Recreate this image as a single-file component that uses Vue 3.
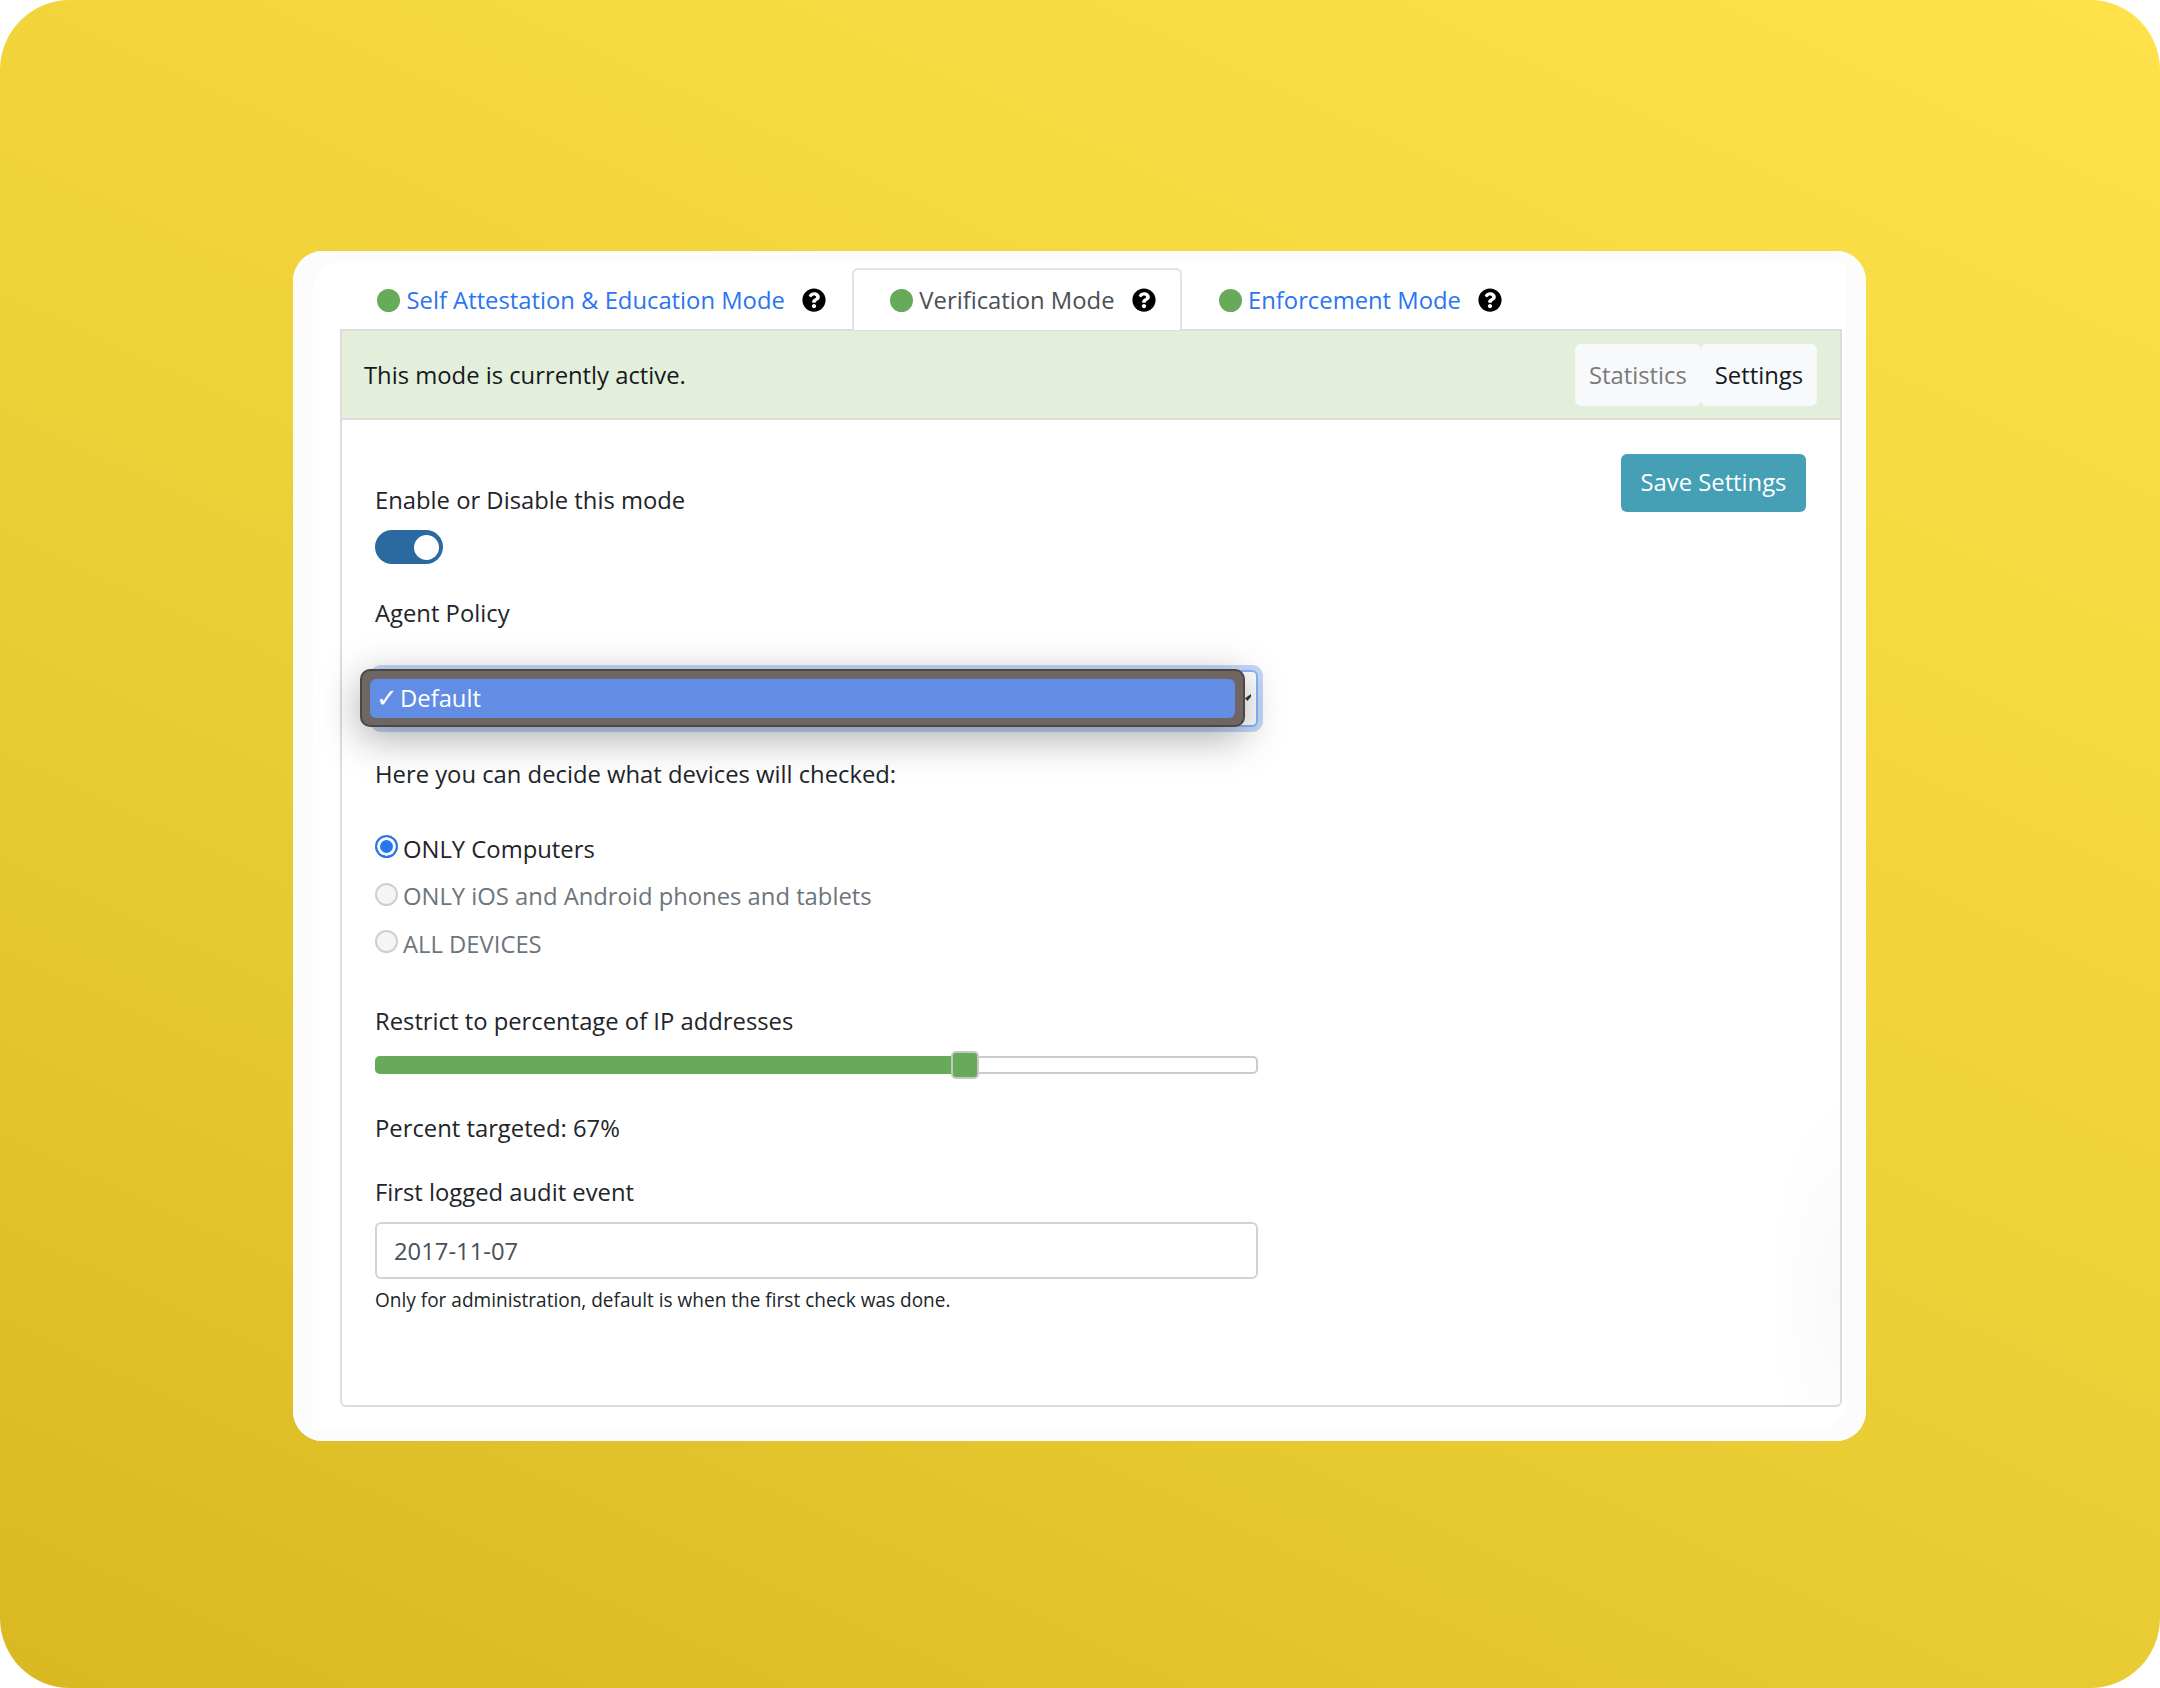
<template>
  <div class="page">
    <div class="card">
      <ul class="tabs">
        <li v-for="tab in tabs" :key="tab.name" class="tab" :class="{ active: tab.active }">
          <span class="dot"></span>
          <span class="tab-name">{{ tab.name }}</span>
          <svg class="help" viewBox="0 0 512 512">
            <path d="M504 256c0 137-111 248-248 248S8 393 8 256 119 8 256 8s248 111 248 248zM262.7 90c-54.500 0-89.300 23-116.500 63.800-3.500 5.300-2.400 12.400 2.700 16.300l34.700 26.300c5.200 3.900 12.600 3 16.700-2.100 17.900-22.700 30.100-35.800 57.300-35.800 20.400 0 45.700 13.100 45.700 33 0 15-12.400 22.700-32.600 34-23.600 13.200-54.800 29.700-54.800 70.900V300c0 6.600 5.400 12 12 12h56c6.600 0 12-5.400 12-12v-1.300c0-28.600 83.500-29.800 83.500-107.200C379 133.200 318.500 90 262.700 90zM256 339c-25.400 0-46 20.600-46 46s20.600 46 46 46 46-20.600 46-46-20.600-46-46-46z" />
          </svg>
        </li>
      </ul>
      <div class="panel">
        <div class="alert">
          <span>This mode is currently active.</span>
          <div class="btn-group">
            <span class="seg muted">Statistics</span>
            <span class="seg">Settings</span>
          </div>
        </div>
        <div class="panel-body">
          <button class="save">Save Settings</button>
          <div class="form">
            <div class="label first">Enable or Disable this mode</div>
            <div class="toggle"><span class="knob"></span></div>
            <div class="label policy">Agent Policy</div>
            <div class="select">
              <div class="select-box"><span class="caret"></span></div>
              <div class="menu">
                <div class="option"><span class="check">✓</span><span>Default</span></div>
              </div>
            </div>
            <div class="label decide">Here you can decide what devices will checked:</div>
            <div class="radios">
              <div v-for="r in radios" :key="r.text" class="radio" :class="{ on: r.on }">
                <span class="circle"></span>
                <span>{{ r.text }}</span>
              </div>
            </div>
            <div class="label restrict">Restrict to percentage of IP addresses</div>
            <div class="slider">
              <div class="fill" :style="{ width: percent * 0.985 + '%' }"></div>
              <div class="handle"></div>
            </div>
            <div class="label targeted">Percent targeted: {{ percent }}%</div>
            <div class="label logged">First logged audit event</div>
            <div class="input">2017-11-07</div>
            <div class="hint">Only for administration, default is when the first check was done.</div>
          </div>
        </div>
      </div>
    </div>
  </div>
</template>

<script setup>
const percent = 67

const tabs = [
  { name: 'Self Attestation & Education Mode', active: false },
  { name: 'Verification Mode', active: true },
  { name: 'Enforcement Mode', active: false }
]

const radios = [
  { text: 'ONLY Computers', on: true },
  { text: 'ONLY iOS and Android phones and tablets', on: false },
  { text: 'ALL DEVICES', on: false }
]
</script>

<style>
body {
  margin: 0;
  background: #fff;
}
</style>

<style scoped>
.page {
  width: 2160px;
  height: 1688px;
  box-sizing: border-box;
  padding: 251px 294px 0 293px;
  border-radius: 70px;
  background: linear-gradient(205deg, #ffe24b 0%, #f3d53b 37%, #ebce35 57%, #d9b821 100%);
  font-family: "Open Sans", "Noto Sans", sans-serif;
  font-size: 23.8px;
  line-height: 36px;
  color: #212529;
}

.card {
  height: 1190px;
  box-sizing: border-box;
  padding: 17px 24px 0 47px;
  border-radius: 30px;
  background: #fff;
  box-shadow: inset 20px 11px 0 #fcfcfc, inset -20px -11px 0 #fcfcfc;
}

.tabs {
  display: flex;
  height: 61px;
  margin: 0;
  padding: 0 0 0 37px;
  list-style: none;
}

.tab {
  display: flex;
  align-items: center;
  box-sizing: border-box;
  height: 62px;
  padding: 2px 19px 0 0;
  color: #2a75f3;
}

.tab.active {
  margin: 0 0 0 7px;
  padding: 0 24px 0 36px;
  border: 2px solid #dfe3e8;
  border-bottom: 0;
  border-radius: 6px 6px 0 0;
  background: #fff;
  color: #495057;
}

.tab:last-child {
  padding-left: 37px;
}

.dot {
  width: 23px;
  height: 23px;
  margin-right: 6.5px;
  border-radius: 50%;
  background: #66aa5a;
}

.help {
  width: 24px;
  height: 24px;
  margin-left: 17px;
  fill: #000;
}

.panel {
  box-sizing: border-box;
  height: 1078px;
  border: 2px solid #dcdcdc;
  border-radius: 0 0 6px 6px;
  background: radial-gradient(ellipse 70px 200px at 100% 90%, #f9f9f9, #fff);
}

.alert {
  display: flex;
  align-items: center;
  justify-content: space-between;
  box-sizing: border-box;
  height: 89px;
  padding: 0 23px 0 22px;
  border-bottom: 2px solid #dcdcdc;
  background: #e3efdb;
  color: #16191c;
}

.btn-group {
  display: flex;
}

.seg {
  padding: 13px 14px;
  border-radius: 6px;
  background: #f8f9fb;
}

.seg.muted {
  color: #7a7a7a;
}

.panel-body {
  position: relative;
  padding: 0 33px;
}

.save {
  position: absolute;
  top: 34px;
  right: 34px;
  width: 185px;
  height: 58px;
  padding: 0 0 2px;
  border: 0;
  border-radius: 6px;
  background: #459fb5;
  color: #fff;
  font: inherit;
}

.form {
  width: 883px;
}

.label {
  height: 36px;
}

.first {
  padding-top: 62px;
}

.toggle {
  display: flex;
  align-items: center;
  justify-content: flex-end;
  box-sizing: border-box;
  width: 68px;
  height: 34px;
  margin-top: 12px;
  padding-right: 4px;
  border-radius: 17px;
  background: #2a6aa0;
}

.knob {
  width: 25px;
  height: 25px;
  border-radius: 50%;
  background: #fff;
}

.policy {
  margin-top: 31px;
}

.select {
  position: relative;
  height: 57px;
  margin-top: 39px;
}

.select-box {
  position: relative;
  box-sizing: border-box;
  height: 57px;
  border: 2px solid #86b7fe;
  border-radius: 6px;
  background: #fff;
  box-shadow: 0 0 0 5px #c5d8f7;
}

.caret {
  position: absolute;
  top: 22px;
  right: 5px;
  width: 6px;
  height: 7px;
  background: #343a40;
  clip-path: polygon(100% 0, 100% 40%, 40% 100%, 0 60%);
}

.menu {
  position: absolute;
  top: -1px;
  left: -15px;
  box-sizing: border-box;
  width: 885px;
  height: 58px;
  padding: 8px;
  border: 2px solid #4a4746;
  border-radius: 10px;
  background: #6f6563;
  box-shadow: 0 10px 40px rgba(0, 0, 0, 0.34);
}

.option {
  display: flex;
  height: 39px;
  padding-left: 6px;
  border-radius: 6px;
  background: #618de4;
  color: #fff;
  line-height: 39px;
}

.check {
  width: 24px;
  font-family: "DejaVu Sans", sans-serif;
  font-size: 26px;
}

.decide {
  margin-top: 29px;
}

.radios {
  margin-top: 33px;
}

.radio {
  display: flex;
  align-items: center;
  gap: 5px;
  height: 47.5px;
  color: #6c757d;
}

.radio.on {
  color: #212529;
}

.circle {
  box-sizing: border-box;
  width: 23px;
  height: 23px;
  margin-top: -4px;
  border: 2px solid #cfcfcf;
  border-radius: 50%;
  background: #f5f5f5;
}

.on .circle {
  margin-top: -5px;
  border-color: #2a75f3;
  background: #2a75f3;
  box-shadow: inset 0 0 0 3px #fff;
}

.restrict {
  margin-top: 35px;
}

.slider {
  position: relative;
  box-sizing: border-box;
  height: 18px;
  margin-top: 17px;
  border: 2px solid #cbcbcb;
  border-radius: 5px;
  background: #fff;
}

.fill {
  height: 18px;
  margin: -2px 0 0 -2px;
  border-radius: 5px 0 0 5px;
  background: #66aa5a;
}

.handle {
  position: absolute;
  top: -7px;
  left: 574px;
  box-sizing: border-box;
  width: 28px;
  height: 28px;
  border: 2px solid #c4c9c2;
  border-radius: 5px;
  background: #66aa5a;
}

.targeted {
  margin-top: 36px;
}

.logged {
  margin-top: 28px;
}

.input {
  box-sizing: border-box;
  height: 57px;
  margin-top: 12px;
  padding: 9px 17px;
  border: 2px solid #ced4da;
  border-radius: 6px;
  background: #fff;
  color: #495057;
}

.hint {
  margin-top: 7px;
  font-size: 19.05px;
  line-height: 28px;
}
</style>
